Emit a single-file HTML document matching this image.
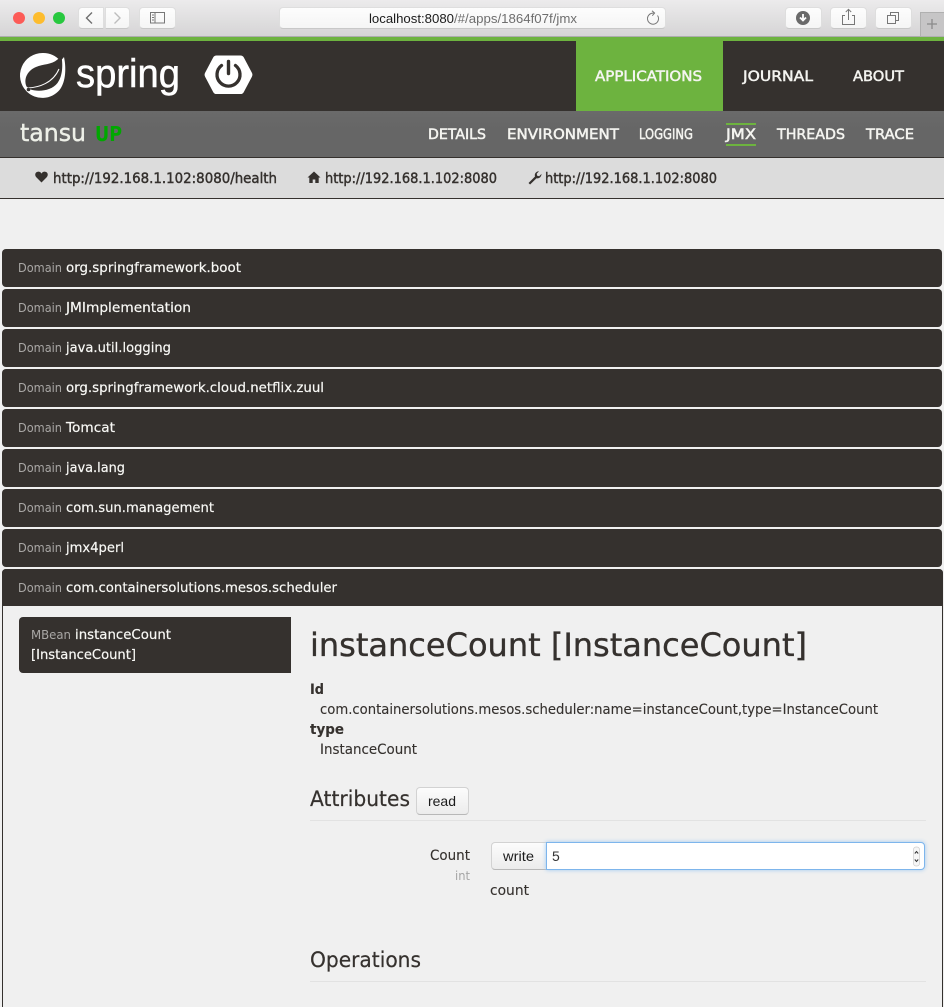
<!DOCTYPE html>
<html lang="en"><head><meta charset="utf-8"><title>JMX</title>
<style>
html,body{margin:0;padding:0;width:944px;height:1007px;overflow:hidden;background:#f0f0f0}
#p{position:relative;width:944px;height:1007px;overflow:hidden}
#p div{position:absolute;box-sizing:border-box}
svg{position:absolute;left:0;top:0}
text{font-family:"DejaVu Sans",sans-serif;white-space:pre}
.n{font-family:"Liberation Sans",sans-serif;fill:#1c1c1c}
.m{font-size:14px;fill:#f4f4f0;stroke:#f4f4f0;stroke-width:.5px}
.l{font-size:14px;fill:#35312e;stroke:#35312e;stroke-width:.45px}
.d{font-size:12px;fill:#a9a7a5}
.w{font-size:13.5px;fill:#f8f8f5;stroke:#f8f8f5;stroke-width:.2px}
.b{font-size:14px;fill:#35312e;stroke:#35312e;stroke-width:.12px}
.row{left:2px;width:940px;height:38px;background:#35312e;border-radius:4px}
.tb{background:linear-gradient(#fdfdfd,#f5f5f5);border:1px solid #dedede;border-bottom-color:#c8c8c8;border-radius:4px}
.btn{background:linear-gradient(#fcfcfc,#ececec);border:1px solid #d2d2d2;border-bottom-color:#b8b8b8}
</style></head><body><div id="p">
<div style="left:0;top:0;width:944px;height:37px;background:linear-gradient(#ecebec,#d5d4d5)"></div>
<div style="left:0;top:36px;width:944px;height:1px;background:#adadad"></div>
<div style="left:13px;top:12px;width:12px;height:12px;border-radius:50%;background:#fc5b57"></div>
<div style="left:33px;top:12px;width:12px;height:12px;border-radius:50%;background:#fdbc2e"></div>
<div style="left:53px;top:12px;width:12px;height:12px;border-radius:50%;background:#28c83f"></div>
<div class="tb" style="left:78px;top:7px;width:26px;height:22px;border-radius:4px 0 0 4px"></div>
<div class="tb" style="left:105px;top:7px;width:25px;height:22px;border-radius:0 4px 4px 0"></div>
<div class="tb" style="left:139px;top:7px;width:37px;height:22px"></div>
<div class="tb" style="left:279px;top:7px;width:387px;height:22px"></div>
<div class="tb" style="left:785px;top:7px;width:37px;height:22px"></div>
<div class="tb" style="left:830px;top:7px;width:37px;height:22px"></div>
<div class="tb" style="left:875px;top:7px;width:37px;height:22px"></div>
<div style="left:920px;top:12px;width:24px;height:25px;background:#c6c5c6;border:1px solid #b0b0b0;border-right:0"></div>

<div style="left:0;top:37px;width:944px;height:74px;background:#35312e"></div>
<div style="left:0;top:37px;width:944px;height:4px;background:#6db33f"></div>
<div style="left:576px;top:37px;width:147px;height:74px;background:#6db33f"></div>
<div style="left:0;top:111px;width:944px;height:47px;background:linear-gradient(#6a6a6a,#666 40%,#666);border-bottom:1px solid #35312e"></div>
<div style="left:0;top:158px;width:944px;height:41px;background:#dcdcdc;border-bottom:1px solid #35312e"></div>
<div style="left:726px;top:123px;width:30px;height:2px;background:#6db33f"></div>
<div style="left:726px;top:144px;width:30px;height:2px;background:#6db33f"></div>

<div class="row" style="top:249px"></div>
<div class="row" style="top:289px"></div>
<div class="row" style="top:329px"></div>
<div class="row" style="top:369px"></div>
<div class="row" style="top:409px"></div>
<div class="row" style="top:449px"></div>
<div class="row" style="top:489px"></div>
<div class="row" style="top:529px"></div>
<div style="left:2px;top:569px;width:941px;height:440px;background:#f0f0f0;border:1px solid #35312e;border-radius:4px 4px 0 0"></div>
<div style="left:2px;top:569px;width:941px;height:37px;background:#35312e;border-radius:4px 4px 0 0"></div>
<div style="left:19px;top:617px;width:272px;height:56px;background:#35312e;border-radius:4px 0 0 4px"></div>

<div style="left:310px;top:820px;width:616px;height:1px;background:#e2e2e2"></div>
<div style="left:310px;top:981px;width:616px;height:1px;background:#e2e2e2"></div>
<div class="btn" style="left:416px;top:787px;width:53px;height:28px;border-radius:4px"></div>
<div class="btn" style="left:491px;top:842px;width:56px;height:28px;border-radius:4px 0 0 4px"></div>
<div style="left:546px;top:842px;width:379px;height:28px;background:#fff;border:1px solid #7db5ec;border-radius:0 4px 4px 0;box-shadow:0 0 4px #9cc8f2"></div>

<svg width="944" height="1007" viewBox="0 0 944 1007">
<!-- browser chrome icons -->
<path d="M92 12.5 L86.500 18 L92 23.500" fill="none" stroke="#6e6e6e" stroke-width="1.400"/>
<path d="M114.500 12.500 L120 18 L114.500 23.500" fill="none" stroke="#bdbdbd" stroke-width="1.400"/>
<rect x="150.500" y="12.500" width="14" height="10.500" fill="none" stroke="#777" stroke-width="1"/>
<path d="M155 12.500V23M152 15h2M152 17.500h2M152 20h2" stroke="#777" stroke-width="1" fill="none"/>
<circle cx="803" cy="18" r="7" fill="#6a6a6a"/>
<path d="M803 14v5M800 17.500l3 3 3-3" stroke="#fff" stroke-width="1.800" fill="none"/>
<path d="M845 15.500h-2.500v9h12v-9H852M848.500 20V9.500M845.800 12l2.700-2.700 2.700 2.700" fill="none" stroke="#777" stroke-width="1"/>
<path d="M887.500 15.500h8v8h-8zM890.500 15.500v-3h8v8h-3" fill="none" stroke="#777" stroke-width="1"/>
<path d="M932 19v10M927 24h10" stroke="#8a8a8a" stroke-width="1.300"/>
<path d="M657.500 15.500a5.500 5.500 0 1 1-4-2.300M652 10.800l2.600 2.300-2.300 2.600" fill="none" stroke="#777" stroke-width="1"/>

<text class="n" x="369" y="23" font-size="13" textLength="85" lengthAdjust="spacingAndGlyphs">localhost:8080</text>
<text class="n" x="454" y="23" font-size="13" textLength="123" lengthAdjust="spacingAndGlyphs" style="fill:#6e6e6e">/#/apps/1864f07f/jmx</text>

<!-- spring logo -->
<path d="M42.500 53a22.500 22.500 0 0 0-16 38.300l.3 .3a22.500 22.500 0 0 0 32.700-1.600c5.500-6.500 7.300-20 4.500-33-1.200 1.700-2.400 2.800-3.800 3.800A22.500 22.500 0 0 0 42.500 53z" fill="#fff"/>
<path d="M26.500 86.500c-3.500-8.500 2-16.500 9.500-19.500 7-3 15.500-2.300 21.500-7.500 1.800-1.500 3.300-2.500 4-3 1.300 8 1.500 19-4 26.500-6 8-19 9-27 6.500z" fill="#35312e"/>
<path d="M27.500 88c11.500-.5 25.500-5 31.500-19" fill="none" stroke="#fff" stroke-width="1"/>
<circle cx="28.500" cy="89.500" r="1.800" fill="#35312e"/>
<text x="76" y="87" font-size="40" textLength="104" lengthAdjust="spacingAndGlyphs" style="font-family:'Liberation Sans',sans-serif;fill:#fff;stroke:#fff;stroke-width:.5px">spring</text>
<path d="M216.500 55.500h24c1.500 0 2.500 .6 3.200 1.800l8.200 15.500c.7 1.300 .7 2.600 0 3.900l-8.200 15.500c-.7 1.200-1.700 1.800-3.200 1.800h-24c-1.500 0-2.500-.6-3.200-1.800l-8.200-15.500c-.7-1.300-.7-2.600 0-3.900l8.200-15.500c.7-1.200 1.700-1.800 3.200-1.800z" fill="#fff"/>
<path d="M221.500 65.500a11.500 11.500 0 1 0 14 0" fill="none" stroke="#35312e" stroke-width="3.300" stroke-linecap="round"/>
<path d="M228.500 61.500v12" fill="none" stroke="#35312e" stroke-width="3.400" stroke-linecap="round"/>

<!-- nav -->
<text class="m" x="595" y="81" textLength="107" lengthAdjust="spacingAndGlyphs">APPLICATIONS</text>
<text class="m" x="743" y="81" textLength="70" lengthAdjust="spacingAndGlyphs">JOURNAL</text>
<text class="m" x="853" y="81" textLength="51" lengthAdjust="spacingAndGlyphs">ABOUT</text>
<text x="20" y="141" font-size="24" textLength="66" lengthAdjust="spacingAndGlyphs" style="fill:#eef0e8;stroke:#eef0e8;stroke-width:.4px">tansu</text>
<text x="95" y="141" font-size="20" font-weight="bold" textLength="27" lengthAdjust="spacingAndGlyphs" style="fill:#00a800">UP</text>
<text class="m" x="428" y="139" textLength="58" lengthAdjust="spacingAndGlyphs">DETAILS</text>
<text class="m" x="507" y="139" textLength="112" lengthAdjust="spacingAndGlyphs">ENVIRONMENT</text>
<text class="m" x="639" y="139" style="font-size:13.800px" textLength="54" lengthAdjust="spacingAndGlyphs">LOGGING</text>
<text class="m" x="726" y="139" textLength="30" lengthAdjust="spacingAndGlyphs">JMX</text>
<text class="m" x="777" y="139" textLength="68" lengthAdjust="spacingAndGlyphs">THREADS</text>
<text class="m" x="866" y="139" textLength="48" lengthAdjust="spacingAndGlyphs">TRACE</text>

<!-- links -->
<path d="M41.500 182.500l-5.200-5.300c-2-2.200-1-5.200 1.500-5.500 1.700-.2 3 .7 3.700 1.900.7-1.200 2-2.100 3.700-1.900 2.500 .3 3.500 3.300 1.500 5.500z" fill="#35312e"/>
<path d="M314 171.500l-6.500 6h1.800v5.500h3.400v-3.500h2.600v3.500h3.400v-5.500h1.800z" fill="#35312e"/>
<path d="M528.500 183l6.500-6.500c-.8-2.500.8-5 4-5.200l-2.300 2.500 .5 2 2 .5 2.300-2.400c0 3-2.500 5-5 4.300l-6.400 6.300z" fill="#35312e"/>
<text class="l" x="53" y="183" textLength="224" lengthAdjust="spacingAndGlyphs">http://192.168.1.102:8080/health</text>
<text class="l" x="325" y="183" textLength="172" lengthAdjust="spacingAndGlyphs">http://192.168.1.102:8080</text>
<text class="l" x="545" y="183" textLength="172" lengthAdjust="spacingAndGlyphs">http://192.168.1.102:8080</text>

<!-- domains -->
<text class="d" x="18" y="272" textLength="44" lengthAdjust="spacingAndGlyphs">Domain</text><text class="w" x="66" y="272" textLength="175" lengthAdjust="spacingAndGlyphs">org.springframework.boot</text>
<text class="d" x="18" y="312" textLength="44" lengthAdjust="spacingAndGlyphs">Domain</text><text class="w" x="66" y="312" textLength="125" lengthAdjust="spacingAndGlyphs">JMImplementation</text>
<text class="d" x="18" y="352" textLength="44" lengthAdjust="spacingAndGlyphs">Domain</text><text class="w" x="66" y="352" textLength="105" lengthAdjust="spacingAndGlyphs">java.util.logging</text>
<text class="d" x="18" y="392" textLength="44" lengthAdjust="spacingAndGlyphs">Domain</text><text class="w" x="66" y="392" textLength="258" lengthAdjust="spacingAndGlyphs">org.springframework.cloud.netflix.zuul</text>
<text class="d" x="18" y="432" textLength="44" lengthAdjust="spacingAndGlyphs">Domain</text><text class="w" x="66" y="432" textLength="49" lengthAdjust="spacingAndGlyphs">Tomcat</text>
<text class="d" x="18" y="472" textLength="44" lengthAdjust="spacingAndGlyphs">Domain</text><text class="w" x="66" y="472" textLength="59" lengthAdjust="spacingAndGlyphs">java.lang</text>
<text class="d" x="18" y="512" textLength="44" lengthAdjust="spacingAndGlyphs">Domain</text><text class="w" x="66" y="512" textLength="148" lengthAdjust="spacingAndGlyphs">com.sun.management</text>
<text class="d" x="18" y="552" textLength="44" lengthAdjust="spacingAndGlyphs">Domain</text><text class="w" x="66" y="552" textLength="58" lengthAdjust="spacingAndGlyphs">jmx4perl</text>
<text class="d" x="18" y="592" textLength="44" lengthAdjust="spacingAndGlyphs">Domain</text><text class="w" x="66" y="592" textLength="271" lengthAdjust="spacingAndGlyphs">com.containersolutions.mesos.scheduler</text>

<!-- mbean -->
<text class="d" x="31" y="639" textLength="40" lengthAdjust="spacingAndGlyphs">MBean</text><text class="w" x="75" y="639" textLength="96" lengthAdjust="spacingAndGlyphs">instanceCount</text>
<text class="w" x="31" y="659" textLength="105" lengthAdjust="spacingAndGlyphs">[InstanceCount]</text>

<!-- detail -->
<text x="310" y="656" font-size="32" textLength="497" lengthAdjust="spacingAndGlyphs" style="fill:#35312e;stroke:#35312e;stroke-width:.35px">instanceCount [InstanceCount]</text>
<text class="b" x="310" y="694" font-weight="bold" textLength="14" lengthAdjust="spacingAndGlyphs">Id</text>
<text class="b" x="320" y="714" textLength="558" lengthAdjust="spacingAndGlyphs">com.containersolutions.mesos.scheduler:name=instanceCount,type=InstanceCount</text>
<text class="b" x="310" y="734" font-weight="bold" textLength="34" lengthAdjust="spacingAndGlyphs">type</text>
<text class="b" x="320" y="754" textLength="97" lengthAdjust="spacingAndGlyphs">InstanceCount</text>
<text x="310" y="806" font-size="21" textLength="100" lengthAdjust="spacingAndGlyphs" style="fill:#35312e;stroke:#35312e;stroke-width:.2px">Attributes</text>
<text class="n" x="428" y="806" font-size="14" textLength="28" lengthAdjust="spacingAndGlyphs">read</text>
<text class="b" x="430" y="860" textLength="40" lengthAdjust="spacingAndGlyphs">Count</text>
<text x="455" y="880" font-size="12" textLength="15" lengthAdjust="spacingAndGlyphs" style="fill:#a5a5a5">int</text>
<text class="n" x="503" y="861" font-size="14" textLength="31" lengthAdjust="spacingAndGlyphs">write</text>
<text class="n" x="552" y="861" font-size="14" style="fill:#333">5</text>
<path d="M913.500 849.500a2.500 2.500 0 0 1 2.500-2.500h1a2.500 2.500 0 0 1 2.500 2.500v14a2.500 2.500 0 0 1-2.500 2.500h-1a2.500 2.500 0 0 1-2.500-2.500z" fill="#f6f6f6" stroke="#ccc" stroke-width=".7"/>
<path d="M914.800 853.500l1.700-2 1.700 2M914.800 859.500l1.700 2 1.700-2" fill="none" stroke="#333" stroke-width="1"/>
<text class="b" x="490" y="895" textLength="39" lengthAdjust="spacingAndGlyphs">count</text>
<text x="310" y="967" font-size="21" textLength="111" lengthAdjust="spacingAndGlyphs" style="fill:#35312e;stroke:#35312e;stroke-width:.2px">Operations</text>
</svg>
</div></body></html>
